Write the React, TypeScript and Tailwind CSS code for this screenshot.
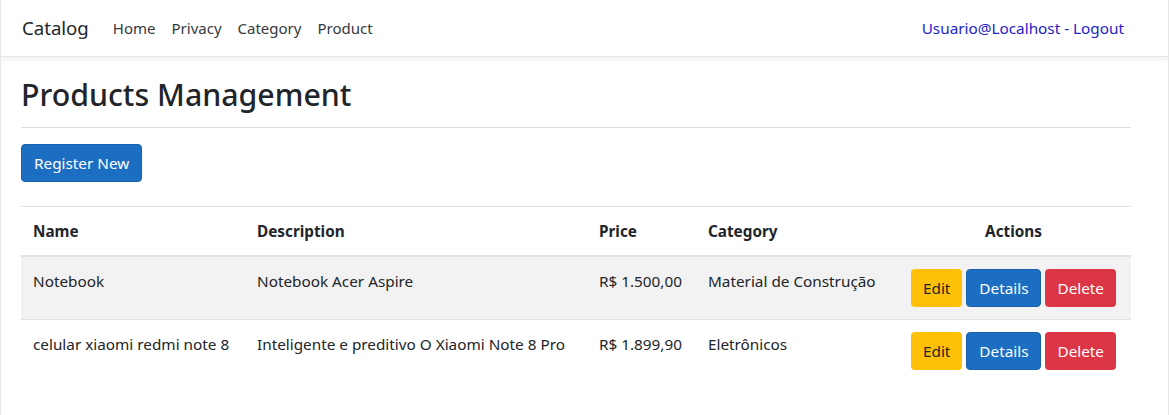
const products = [
  {
    name: "Notebook",
    description: "Notebook Acer Aspire",
    price: "R$ 1.500,00",
    category: "Material de Construção",
  },
  {
    name: "celular xiaomi redmi note 8",
    description: "Inteligente e preditivo O Xiaomi Note 8 Pro",
    price: "R$ 1.899,90",
    category: "Eletrônicos",
  },
];

function NavBar() {
  return (
    <nav className="h-[57px] bg-white border-b border-[#e5e5e5] shadow-[0_3px_6px_rgba(0,0,0,0.05)] flex items-center">
      <div className="flex items-center w-[1110px] ml-[21px]">
        <a className="text-[18.6px] text-[#212529] mr-[16px]">Catalog</a>
        <ul className="flex items-center text-[15px] text-[#343a40]">
          <li className="px-2">Home</li>
          <li className="px-2">Privacy</li>
          <li className="px-2">Category</li>
          <li className="px-2">Product</li>
        </ul>
        <div className="ml-auto px-2 text-[15.3px] text-[#2323c8]">Usuario@Localhost - Logout</div>
      </div>
    </nav>
  );
}

function ActionButtons() {
  return (
    <div className="flex items-center justify-center gap-1">
      <button className="h-[38px] px-3 pt-[1px] rounded-[4px] bg-[#ffc107] text-[#212529]">Edit</button>
      <button className="h-[38px] px-3 pt-[1px] rounded-[4px] bg-[#1b6ec2] border border-[#1861ac] text-white">Details</button>
      <button className="h-[38px] px-3 pt-[1px] rounded-[4px] bg-[#dc3545] text-white">Delete</button>
    </div>
  );
}

export default function App() {
  return (
    <div className="w-[1169px] h-[415px] bg-white border-x border-[#e6e6e6] font-['Noto_Sans',sans-serif] text-[15.3px] text-[#212529] overflow-hidden">
      <NavBar />
      <main className="ml-[20px] w-[1110px] pt-[20px]">
        <h1 className="text-[30.3px] font-medium leading-[1.2]">Products Management</h1>
        <hr className="mt-[14px] border-t border-[#dedede]" />
        <button className="mt-[16px] h-[38px] px-3 rounded-[4px] bg-[#1b6ec2] border border-[#1861ac] text-white">
          Register New
        </button>
        <table className="mt-[24px] w-full table-fixed text-left border-t border-[#dee2e6] whitespace-nowrap">
          <thead>
            <tr className="border-b-2 border-[#dee2e6]">
              <th className="w-[224px] px-3 py-[12px] leading-[24px] font-bold">Name</th>
              <th className="w-[342px] px-3 py-[12px] leading-[24px] font-bold">Description</th>
              <th className="w-[109px] px-3 py-[12px] leading-[24px] font-bold">Price</th>
              <th className="w-[200px] px-3 py-[12px] leading-[24px] font-bold">Category</th>
              <th className="px-3 py-[12px] leading-[24px] font-bold text-center">Actions</th>
            </tr>
          </thead>
          <tbody>
            {products.map((p, i) => (
              <tr key={p.name} className={`${i % 2 === 0 ? "bg-[#f2f2f2]" : ""} border-t border-[#dee2e6] align-top`}>
                <td className="px-3 pt-[12px] leading-[24px]">{p.name}</td>
                <td className="px-3 pt-[12px] leading-[24px]">{p.description}</td>
                <td className="px-3 pt-[12px] leading-[24px]">{p.price}</td>
                <td className="px-3 pt-[12px] leading-[24px]">{p.category}</td>
                <td className="px-3 pt-[12px] pb-[12px]">
                  <ActionButtons />
                </td>
              </tr>
            ))}
          </tbody>
        </table>
      </main>
    </div>
  );
}
